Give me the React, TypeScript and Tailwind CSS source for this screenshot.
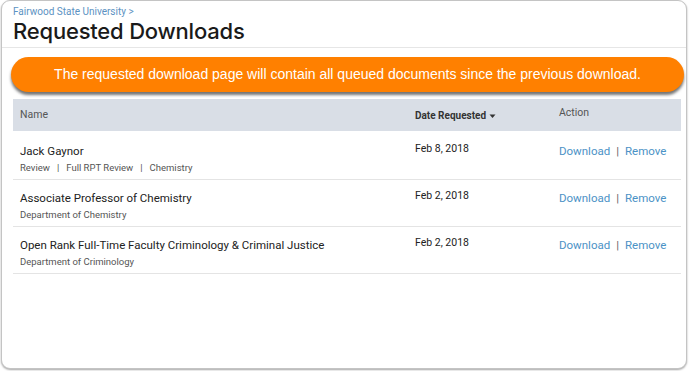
import React from "react";

const rows = [
  {
    title: "Jack Gaynor",
    sub: ["Review", "Full RPT Review", "Chemistry"],
    date: "Feb 8, 2018",
  },
  {
    title: "Associate Professor of Chemistry",
    sub: ["Department of Chemistry"],
    date: "Feb 2, 2018",
  },
  {
    title: "Open Rank Full-Time Faculty Criminology & Criminal Justice",
    sub: ["Department of Criminology"],
    date: "Feb 2, 2018",
  },
];

export default function App() {
  return (
    <div className="w-[689px] h-[371px] bg-white pl-[1px] pr-[2px] pb-[2px]">
      <div className="h-full border border-[#c4c4c4] rounded-[9px] shadow-[0_1px_2px_rgba(0,0,0,0.35)] bg-white overflow-hidden">
        <div className="pl-[11px] pt-[5px] h-[47px] border-b border-[#e6e6e6]">
          <div className="text-[10px] leading-[12px] text-[#5c92c2] font-['Roboto',sans-serif]">
            Fairwood State University &gt;
          </div>
          <div className="text-[22px] leading-[26px] font-medium text-[#1a1a1a] font-['Inter',sans-serif] tracking-[-0.2px]">
            Requested Downloads
          </div>
        </div>
        <div className="pl-[11px] pr-[5px]">
          <div className="mt-[9px] ml-[-2px] mr-[-3px] h-[35px] rounded-full bg-[#ff8000] shadow-[0_3px_3px_rgba(0,0,0,0.55)] flex items-center justify-center text-white text-[14px] font-['Liberation_Sans',Arial,sans-serif]">
            The requested download page will contain all queued documents since the previous download.
          </div>
          <div className="mt-[7px] font-['Roboto',sans-serif]">
            <div className="grid grid-cols-[395px_144px_1fr] h-[32px] bg-[#d9dee6] items-center">
              <div className="pl-[7px] text-[10.5px] text-[#555]">Name</div>
              <div className="pl-[7px] text-[10px] font-bold text-[#333] flex items-center">
                Date Requested
                <svg width="7" height="5" viewBox="0 0 7 5" className="ml-[3px] mt-[3px]">
                  <path d="M0.5 0.5 L6.5 0.5 L3.5 4 Z" fill="#333" />
                </svg>
              </div>
              <div className="pl-[7px] text-[10.5px] text-[#555] mb-[4px]">Action</div>
            </div>
            {rows.map((r, i) => (
              <div
                key={i}
                className={`grid grid-cols-[395px_144px_1fr] border-b border-[#e4e4e4] ${i === 0 ? "h-[49px] pt-[2px]" : "h-[47px]"}`}
              >
                <div className="pl-[7px] pt-[10px]">
                  <div className="text-[11.5px] leading-[16px] text-[#222]">{r.title}</div>
                  <div className="mt-[2px] text-[9.5px] leading-[14px] text-[#555] flex">
                    {r.sub.map((s, j) => (
                      <React.Fragment key={j}>
                        {j > 0 && <span className="px-[7px]">|</span>}
                        <span>{s}</span>
                      </React.Fragment>
                    ))}
                  </div>
                </div>
                <div className="pl-[7px] pt-[9px] text-[10.5px] leading-[14px] text-[#222]">{r.date}</div>
                <div className="pl-[7px] pt-[10px] text-[11.5px] leading-[16px] text-[#4b92c6] flex">
                  <span>Download</span>
                  <span className="text-[#666] px-[6px]">|</span>
                  <span>Remove</span>
                </div>
              </div>
            ))}
          </div>
        </div>
      </div>
    </div>
  );
}
